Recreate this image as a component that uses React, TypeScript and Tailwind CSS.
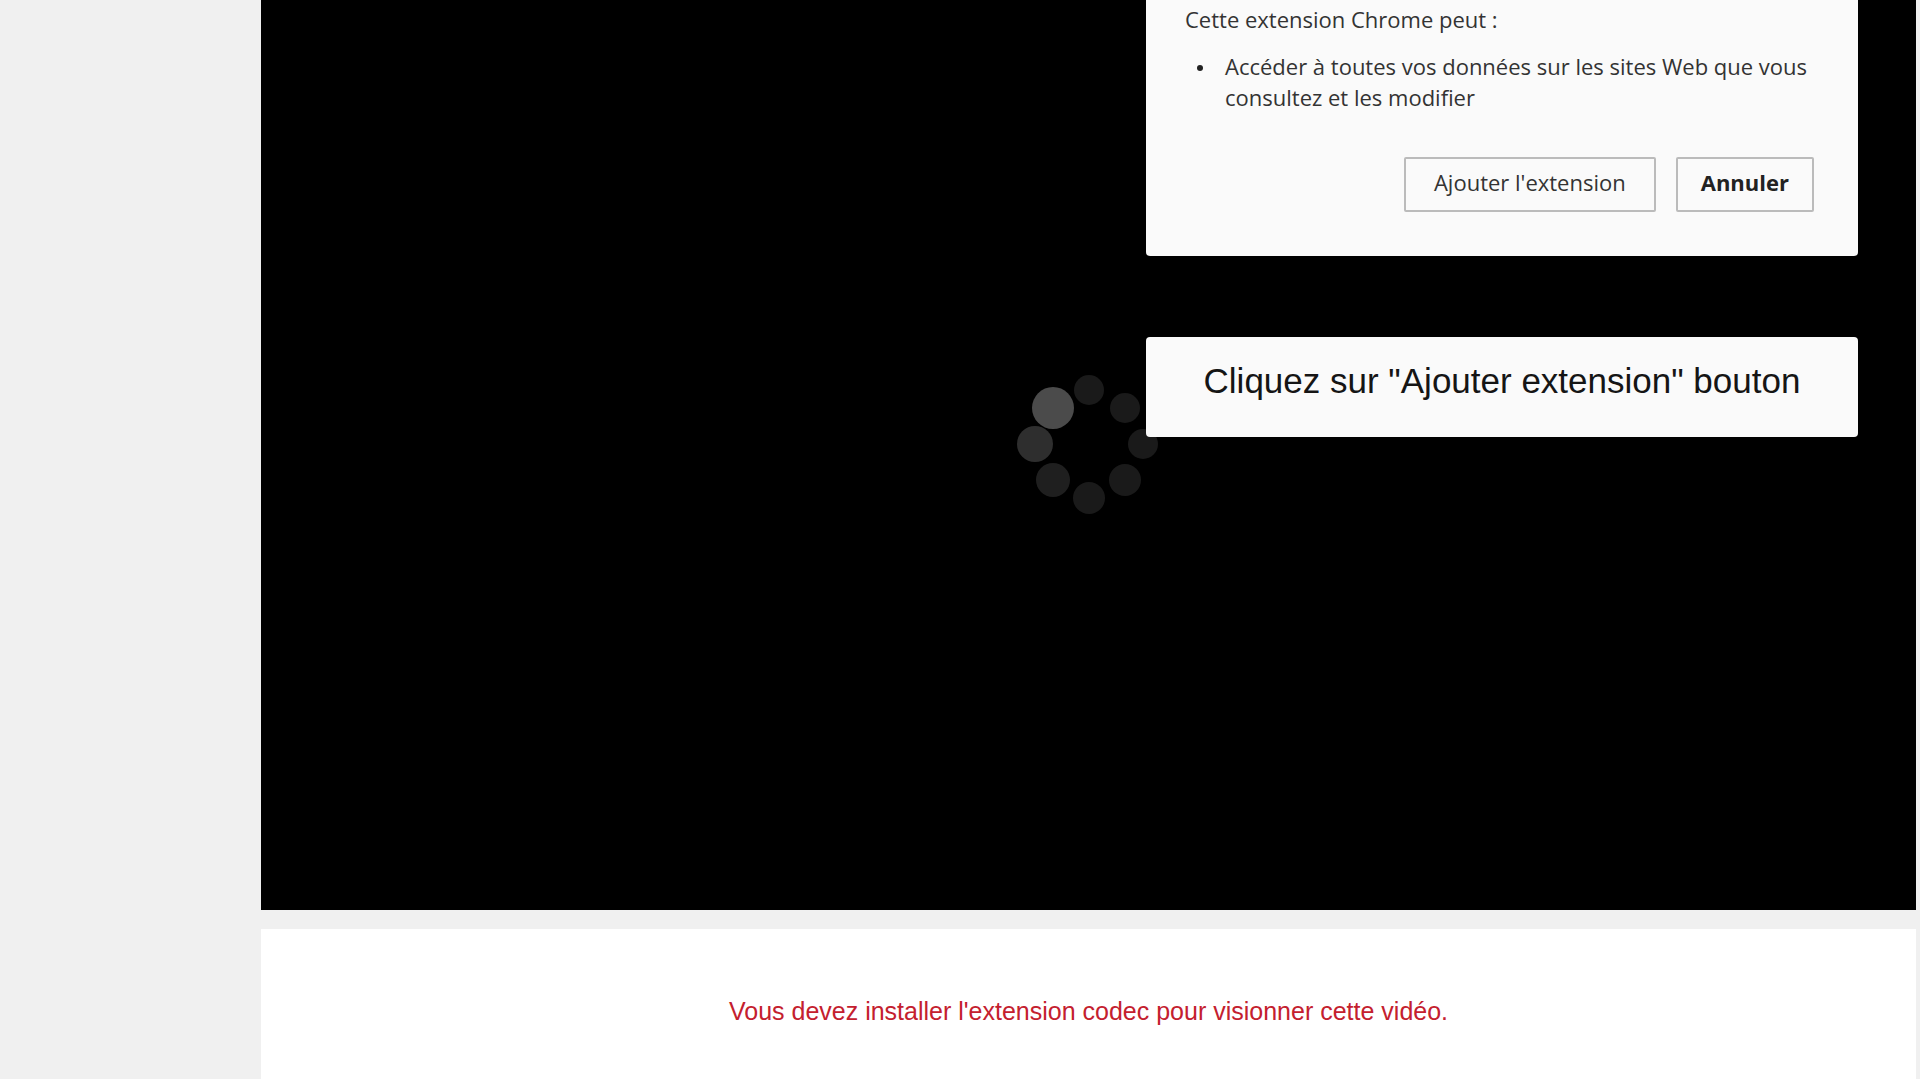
import React from 'react'

const dots = [
  { cx: 76, cy: 22, r: 15, fill: '#1a1a1a' },
  { cx: 112, cy: 40, r: 15, fill: '#1a1a1a' },
  { cx: 130, cy: 76, r: 15, fill: '#1a1a1a' },
  { cx: 112, cy: 112, r: 16, fill: '#1a1a1a' },
  { cx: 76, cy: 130, r: 16, fill: '#1a1a1a' },
  { cx: 40, cy: 112, r: 17, fill: '#1f1f1f' },
  { cx: 22, cy: 76, r: 18, fill: '#2e2e2e' },
  { cx: 40, cy: 40, r: 21, fill: '#4b4b4b' },
]

const Spinner = () => {
  return (
    <svg className='absolute left-1/2 top-[368px] size-[152px] -translate-x-1/2' viewBox='0 0 152 152' aria-hidden='true'>
      {dots.map((dot, i) => (
        <circle key={i} cx={dot.cx} cy={dot.cy} r={dot.r} fill={dot.fill} />
      ))}
    </svg>
  )
}

const ExtensionDialog = () => {
  return (
    <section className='w-full max-w-[712px] rounded-b-sm bg-[#fafafa] pt-1 pr-11 pb-11 pl-[39px] font-["Open_Sans",sans-serif] text-[22px] leading-[31px] text-[#333]'>
      <p>Cette extension Chrome peut :</p>
      <ul className='mt-4'>
        <li className='flex gap-[22px] pl-3'>
          <span className='mt-[14px] size-[6px] shrink-0 rounded-full bg-[#222]' />
          <span>Accéder à toutes vos données sur les sites Web que vous consultez et les modifier</span>
        </li>
      </ul>
      <div className='mt-11 flex justify-end gap-5'>
        <button type='button' className='h-[55px] rounded-xs border-2 border-[#bbb] px-7 pb-1'>Ajouter l'extension</button>
        <button type='button' className='h-[55px] rounded-xs border-2 border-[#bbb] px-[23px] pb-1 font-bold text-[#222]'>Annuler</button>
      </div>
    </section>
  )
}

const App = () => {
  return (
    <main className='flex min-h-screen flex-col gap-[19px] bg-[#f0f0f0] pr-1 pl-[261px] font-["Liberation_Sans",Arial,sans-serif]'>
      <div className='relative flex flex-1 flex-col items-end gap-[81px] bg-black pr-[58px]'>
        <Spinner />
        <ExtensionDialog />
        <p className='relative w-full max-w-[712px] rounded-sm bg-[#fafafa] pt-6 pb-9 text-center text-[35px] leading-10 text-[#151515]'>
          Cliquez sur "Ajouter extension" bouton
        </p>
      </div>

      <div className='h-[150px] bg-white pt-16 text-center text-[25px] leading-9 text-[#c4202e]'>
        <p>Vous devez installer l'extension codec pour visionner cette vidéo.</p>
      </div>
    </main>
  )
}

export default App
